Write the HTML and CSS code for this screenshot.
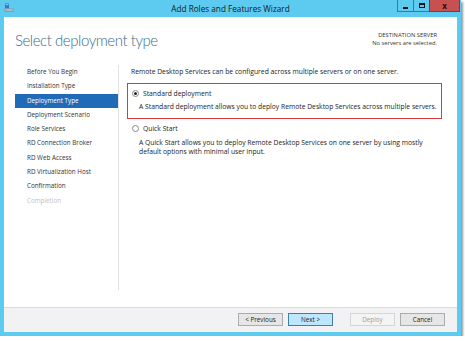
FILE: index.html
```html
<!DOCTYPE html>
<html lang="en">
<head>
  <meta charset="UTF-8" />
  <title>Add Roles and Features Wizard</title>
  <link rel="stylesheet" href="styles.css">
</head>
<body>

<div class="window">
  <div class="titlebar">
    <svg class="app-icon" width="10" height="10" viewBox="0 0 10 10">
      <rect x="1" y="0.5" width="4" height="5" fill="#2f79c9"/>
      <rect x="1.6" y="1.2" width="2.8" height="1" fill="#9fd0f5"/>
      <rect x="0.5" y="5.5" width="9" height="3.5" fill="#8c97a4"/>
      <rect x="1.5" y="6.5" width="7" height="1" fill="#d9dee4"/>
    </svg>
    <span class="title">Add Roles and Features Wizard</span>
    <div class="controls">
      <span class="ctl ctl-min"><i></i></span>
      <span class="ctl ctl-max"><i></i></span>
      <span class="ctl ctl-close">x</span>
    </div>
  </div>

  <div class="content">
    <div class="head">
      <h1>Select deployment type</h1>
      <div class="dest">
        <p>DESTINATION SERVER</p>
        <p>No servers are selected.</p>
      </div>
    </div>

    <div class="main">
      <ul class="nav">
        <li>Before You Begin</li>
        <li>Installation Type</li>
        <li class="active">Deployment Type</li>
        <li>Deployment Scenario</li>
        <li>Role Services</li>
        <li>RD Connection Broker</li>
        <li>RD Web Access</li>
        <li>RD Virtualization Host</li>
        <li>Confirmation</li>
        <li class="disabled">Completion</li>
      </ul>

      <div class="pane">
        <p class="intro">Remote Desktop Services can be configured across multiple servers or on one server.</p>

        <div class="option selected">
          <label class="radio-row"><span class="radio checked"></span>Standard deployment</label>
          <p class="desc">A Standard deployment allows you to deploy Remote Desktop Services across multiple servers.</p>
        </div>

        <div class="option">
          <label class="radio-row"><span class="radio"></span>Quick Start</label>
          <p class="desc">A Quick Start allows you to deploy Remote Desktop Services on one server by using mostly default options with minimal user input.</p>
        </div>
      </div>
    </div>

    <div class="footer">
      <button class="btn">&lt; Previous</button>
      <button class="btn btn-default">Next &gt;</button>
      <button class="btn btn-off deploy">Deploy</button>
      <button class="btn">Cancel</button>
    </div>
  </div>
</div>

</body>
</html>
```

FILE: styles.css
```css
* {
  box-sizing: border-box;
  margin: 0;
  padding: 0;
}
body {
  background: #fff;
  font-family: 'Open Sans', 'Noto Sans', sans-serif;
  font-size: 6.75px;
  color: #222;
}
.window {
  width: 461px;
  height: 336px;
  background: #5ccbef;
  box-shadow: 2px 2px 2px rgba(60, 70, 80, 0.55);
  display: flex;
  flex-direction: column;
}
.titlebar {
  height: 17px;
  position: relative;
  display: flex;
  align-items: center;
  justify-content: center;
}
.app-icon {
  position: absolute;
  left: 4px;
  top: 3px;
}
.title {
  font-size: 8.2px;
  color: #1a1a1a;
  margin-top: -1px;
}
.controls {
  position: absolute;
  right: 1px;
  top: 0;
  display: flex;
}
.ctl {
  height: 12px;
  width: 16px;
  border: 1px solid #3b7a96;
  border-top: none;
  border-right: none;
  display: flex;
  align-items: center;
  justify-content: center;
}
.ctl-min i {
  width: 5px;
  height: 2px;
  background: #111;
  margin-top: 4px;
}
.ctl-max i {
  width: 6px;
  height: 5px;
  border: 1px solid #111;
  border-top-width: 2px;
}
.ctl-close {
  width: 31px;
  background: #c75050;
  border-color: #8c3434;
  border-right: 1px solid #8c3434;
  color: #2a0c0c;
  font-weight: 700;
  font-size: 8px;
  line-height: 1;
}
.content {
  flex: 1;
  margin: 0 4px 4px;
  background: #fff;
  display: flex;
  flex-direction: column;
}
.head {
  height: 45px;
  display: flex;
  justify-content: space-between;
  padding: 12px 20px 0 11px;
}
h1 {
  font-family: Lato, 'Open Sans', sans-serif;
  font-weight: 300;
  font-size: 15px;
  letter-spacing: -0.45px;
  color: #3d6b88;
  line-height: 22px;
}
.dest {
  text-align: right;
  font-size: 5.8px;
  line-height: 8px;
  color: #333;
  padding-top: 2px;
}
.main {
  flex: 1;
  display: flex;
}
.nav {
  list-style: none;
  width: 115px;
  margin: 3px 0 17px 0;
  padding-left: 11px;
  border-right: 1px solid #e2e2e2;
  font-size: 6.3px;
}
.nav li {
  height: 14.3px;
  line-height: 14.3px;
  padding-left: 12px;
  color: #333;
}
.nav li.active {
  background: #1f6bb8;
  color: #fff;
}
.nav li.disabled {
  color: #c2c2c2;
}
.pane {
  flex: 1;
  padding: 3px 10px 0 12px;
}
.intro {
  line-height: 13px;
  margin-bottom: 5px;
}
.option {
  width: 315px;
  margin-left: -4px;
  padding: 3px 2px 6px 4px;
  border: 1px solid transparent;
}
.option.selected {
  border: 1px solid #d8393b;
}
.radio-row {
  display: flex;
  align-items: center;
  height: 12px;
}
.radio {
  width: 7px;
  height: 7px;
  border-radius: 50%;
  border: 1px solid #8a8a8a;
  margin-right: 4px;
  position: relative;
  background: #fff;
}
.radio.checked::after {
  content: "";
  position: absolute;
  left: 1px;
  top: 1px;
  width: 3px;
  height: 3px;
  border-radius: 50%;
  background: #222;
}
.desc {
  padding-left: 7px;
  margin-top: 3px;
  line-height: 9.5px;
}
.footer {
  height: 25px;
  border-top: 1px solid #dcdcdc;
  background: #f2f1f4;
  display: flex;
  justify-content: flex-end;
  padding: 5px 12px 0 0;
  gap: 5px;
}
.btn {
  width: 45px;
  height: 13px;
  font-family: inherit;
  font-size: 6.3px;
  color: #222;
  background: #e6e6e6;
  border: 1px solid #acacac;
}
.btn-default {
  background: #bee6fd;
  border-color: #3c7fb1;
}
.btn-off {
  background: #f4f4f4;
  border-color: #d5d5d5;
  color: #a0a0a0;
}
.deploy {
  margin-left: 12px;
}
```
